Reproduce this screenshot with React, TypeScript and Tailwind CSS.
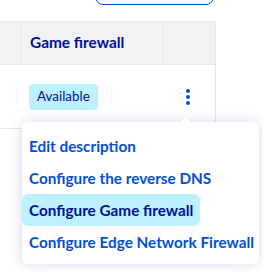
export default function App() {
  const items = [
    "Edit description",
    "Configure the reverse DNS",
    "Configure Game firewall",
    "Configure Edge Network Firewall",
  ];

  return (
    <div className="relative h-[272px] w-[263px] overflow-hidden bg-white font-['Lato',sans-serif]">
      <div className="ml-[95px] mt-[-36px] h-[41px] w-[119px] rounded-[8px] border border-[#0050d7]" />

      <div className="mt-[16px] w-[216px] border-r border-[#e6e6e6]">
        <div className="grid h-[44px] grid-cols-[21px_143px_52px] border-y border-[#e6e6e6] bg-[#f2f2f2]">
          <div className="border-r border-[#e6e6e6]" />
          <div className="flex items-center border-r border-[#e6e6e6] pl-[9px] text-[15.4px] font-bold text-[#000e9c]">
            Game firewall
          </div>
          <div />
        </div>
        <div className="grid h-[64px] grid-cols-[21px_143px_52px] border-b border-[#e6e6e6]">
          <div />
          <div className="flex items-center pl-[8px]">
            <span className="flex h-[26px] items-center rounded-[4px] bg-[#bef1ff] px-[8px] text-[13.4px] text-[#000e9c]">
              Available
            </span>
          </div>
          <div className="flex items-center pl-[22px]">
            <div className="flex flex-col gap-[2px]">
              <span className="h-[4px] w-[4px] rounded-full bg-[#0050d7]" />
              <span className="h-[4px] w-[4px] rounded-full bg-[#0050d7]" />
              <span className="h-[4px] w-[4px] rounded-full bg-[#0050d7]" />
            </div>
          </div>
        </div>
      </div>

      <div className="absolute left-[22px] top-[122px] w-[237px] rounded-[6px] bg-white pb-[6px] pt-[8px] shadow-[0_0_14px_rgba(0,14,156,0.16)]">
        <div className="absolute right-[67px] top-[-5px] h-0 w-0 border-x-[6px] border-b-[6px] border-x-transparent border-b-white" />
        {items.map((label, i) => (
          <div key={label}>
            <div
              className={
                i === 2
                  ? "inline-flex h-[32px] items-center whitespace-nowrap rounded-[6px] bg-[#bef1ff] px-[7px] text-[15.3px] font-bold text-[#000e9c]"
                  : "inline-flex h-[32px] items-center whitespace-nowrap px-[7px] text-[15.3px] font-bold text-[#0050d7]"
              }
            >
              {label}
            </div>
          </div>
        ))}
      </div>
    </div>
  );
}
